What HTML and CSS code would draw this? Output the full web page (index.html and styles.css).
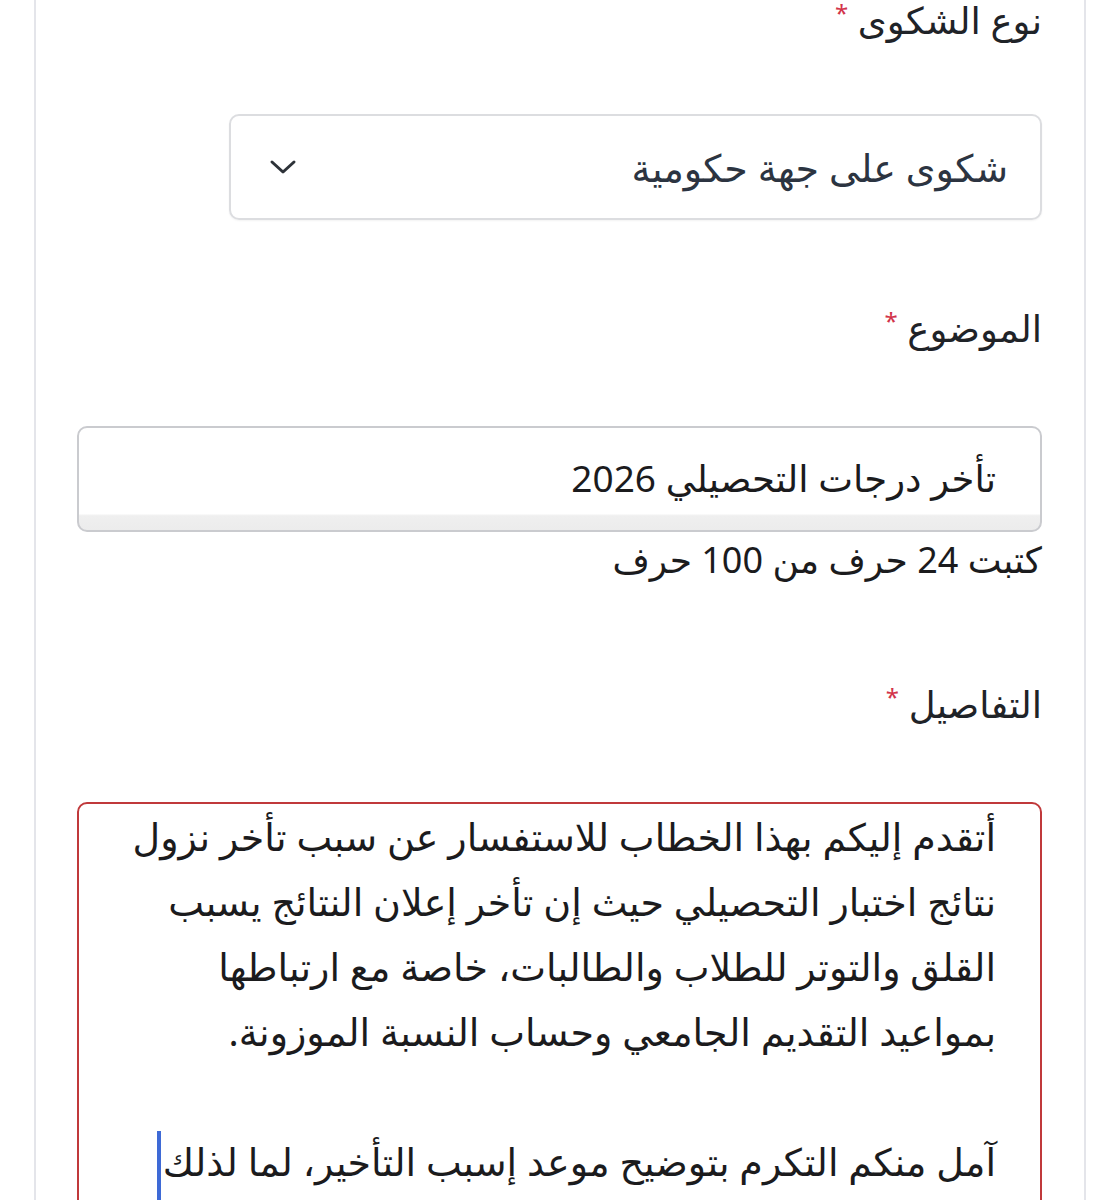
FILE: index.html
```html
<!DOCTYPE html>
<html lang="ar" dir="rtl">
<head>
  <meta charset="UTF-8" />
  <meta name="viewport" content="width=device-width, initial-scale=1.0" />
  <title>تقديم شكوى</title>
  <link rel="stylesheet" href="styles.css">
</head>
<body>
  <div class="page">
    <form class="card">
      <div class="field">
        <label class="label" for="type">نوع الشكوى <span class="req">*</span></label>
        <div class="select" id="type">
          <span class="select-value">شكوى على جهة حكومية</span>
          <svg class="chevron" width="28" height="18" viewBox="0 0 28 18" aria-hidden="true">
            <path d="M3 4 L14 14 L25 4" fill="none" stroke="#2d3238" stroke-width="3" stroke-linecap="round" stroke-linejoin="round"/>
          </svg>
        </div>
      </div>

      <div class="field">
        <label class="label" for="subject">الموضوع <span class="req">*</span></label>
        <div class="input" id="subject">تأخر درجات التحصيلي 2026</div>
        <div class="hint">كتبت 24 حرف من 100 حرف</div>
      </div>

      <div class="field details">
        <label class="label" for="details">التفاصيل <span class="req">*</span></label>
        <div class="textarea" id="details">
          <div class="line">أتقدم إليكم بهذا الخطاب للاستفسار عن سبب تأخر نزول</div>
          <div class="line">نتائج اختبار التحصيلي حيث إن تأخر إعلان النتائج يسبب</div>
          <div class="line">القلق والتوتر للطلاب والطالبات، خاصة مع ارتباطها</div>
          <div class="line">بمواعيد التقديم الجامعي وحساب النسبة الموزونة.</div>
          <div class="line">&nbsp;</div>
          <div class="line">آمل منكم التكرم بتوضيح موعد إسبب التأخير، لما لذلك<span class="caret"></span></div>
        </div>
      </div>
    </form>
  </div>
</body>
</html>
```

FILE: styles.css
```css
body {
  margin: 0;
  background: #fff;
  font-family: "Noto Sans", "DejaVu Sans", sans-serif;
  color: #1f2328;
  overflow: hidden;
}
.page {
  padding: 0 34px;
  height: 1200px;
}
.card {
  height: 100%;
  border-left: 2px solid #e4e5ea;
  border-right: 2px solid #e4e5ea;
  padding: 0 42px 0 41px;
}
.field {
  display: flex;
  flex-direction: column;
  align-items: flex-start;
}
.field + .field {
  margin-top: 88px;
}
.field.details {
  margin-top: 102px;
}
.label {
  font-size: 37px;
  line-height: 40px;
  color: #1f2328;
}
.req {
  color: #d2344a;
  font-size: 24px;
  vertical-align: top;
  line-height: 26px;
}
.select {
  margin-top: 74px;
  width: 813px;
  height: 106px;
  box-sizing: border-box;
  border: 2px solid #dcdde0;
  border-radius: 10px;
  display: flex;
  align-items: center;
  justify-content: space-between;
  padding: 0 32px 0 38px;
  box-shadow: 0 1px 2px rgba(0,0,0,0.05);
}
.select-value {
  font-size: 38px;
  color: #2c3441;
}
.chevron {
  display: block;
}
.input {
  margin-top: 78px;
  width: 100%;
  height: 106px;
  box-sizing: border-box;
  border: 2px solid #cacbcf;
  border-radius: 10px;
  padding: 0 44px;
  font-size: 37px;
  line-height: 100px;
  color: #1b1b1d;
  background: linear-gradient(to bottom, #fff 0, #fff 84%, #efefef 86%, #ececec 100%);
}
.hint {
  font-size: 36px;
  line-height: 44px;
  margin-top: 6px;
  color: #1b1b1d;
}
.textarea {
  margin-top: 78px;
  width: 100%;
  height: 420px;
  box-sizing: border-box;
  border: 2px solid #c0393b;
  border-radius: 10px;
  padding: 0 44px;
  overflow: hidden;
  font-size: 38px;
  color: #1b1b1d;
}
.line {
  white-space: nowrap;
  line-height: 65px;
  height: 65px;
}
.caret {
  display: inline-block;
  width: 4px;
  height: 70px;
  background: #3e6ad6;
  vertical-align: middle;
  margin-right: 2px;
}
```
